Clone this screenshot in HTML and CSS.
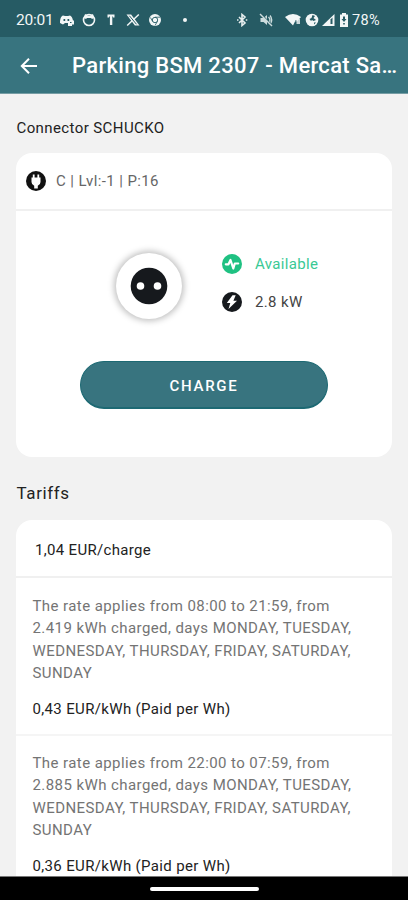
FILE: index.html
```html
<!DOCTYPE html>
<html lang="en">
<head>
  <meta charset="UTF-8">
  <meta name="viewport" content="width=device-width, initial-scale=1">
  <title>Parking BSM 2307 - Mercat Sa…</title>
  <link rel="stylesheet" href="styles.css">
</head>
<body>

<div class="screen">
  <!-- Status bar -->
  <div class="status-bar">
    <span class="time">20:01</span>
    <div class="notifications">
      <svg viewBox="0 0 14 14"><path d="M0 10C0 5 1.500 3 3 2.500l2 .5h3l2-.5c1.500.5 2.500 2.500 3 5h1v4h-2v1.500H8V10H5l-2 1.500z"/><path class="cut" d="M3.500 6h1.700v2H3.500zM7.500 6h1.700v2H7.500zM10 9h1.500v1H10z"/></svg>
      <svg viewBox="0 0 14 14"><circle cx="7" cy="7" r="5.500" fill="none" stroke="#f2f6f6" stroke-width="1.600"/><path d="M2 5l1-4 3 1.500h2L11 1l1 4-2 1-1-1H5L4 6z"/></svg>
      <svg viewBox="0 0 14 14"><path d="M3.500 1.500h7v3H9v-1H8.300v8.500H5.900V3.500H5v1H3.500z"/></svg>
      <svg viewBox="0 0 14 14"><path d="M.5 1.500h4.600l8.400 11H8.900z"/><path d="M12.800 1.500l-11.600 11" stroke="#f2f6f6" stroke-width="1.500"/><path d="M3.300 2.700l7.200 8.600" stroke="#265b64" stroke-width="1"/></svg>
      <svg viewBox="0 0 14 14"><circle cx="7" cy="7" r="6"/><circle class="cut-line" cx="7" cy="7" r="2.700" stroke-width=".9"/><path class="cut-line" d="M7 4.200h5M4.600 8.400L2.400 4.500M9.400 8.400L7 12.500" stroke-width=".8"/></svg>
    </div>
    <span class="dot"></span>
    <div class="system">
      <svg class="bluetooth" viewBox="0 0 12 14"><path d="M3 4l6 6-3 2.500v-11L9 4l-6 6M1 7h1.500M9.800 7h1.500" fill="none" stroke="#e6eeee" stroke-width="1.600"/></svg>
      <svg class="mute" viewBox="0 0 14 14"><path d="M1.500 5h3L8 2v10L4.500 9h-3z" fill="#cddcdd"/><path d="M9.500 4q3 3 0 6M11 2.500q3.500 4.500 0 9" fill="none" stroke="#cddcdd" stroke-width="1.300"/><path d="M2 1l12 12" stroke="#265b64" stroke-width="1.200"/><path d="M1 1l12 12" stroke="#cddcdd" stroke-width="1.400"/></svg>
      <svg class="wifi" viewBox="0 0 16 14"><path d="M0 4Q8-2 16 4l-4 4.500h-2L8 12.500z"/><path class="cut" d="M10.500 7H11.500v4.500h-1z"/><path d="M11.500 6h3.500v5h-3.500z" opacity=".8"/></svg>
      <svg class="data" viewBox="0 0 14 14"><circle cx="7" cy="7" r="6.300"/><path class="cut" d="M7.500 2l2.500 1-1.500 2L11 7 8.500 8 7 7 6 8 4.500 6 6.500 5zM9 9.500h2l-2 2z"/></svg>
      <svg class="signal" viewBox="0 0 13 14"><path d="M12.500 1v12H0z"/><path class="cut" d="M8.500 6.500l2-2V11h-2z"/></svg>
      <svg class="battery" viewBox="0 0 10 14"><path d="M3 0h4v1.500h2V14H1V1.500h2z"/><path class="cut" d="M4 3.500h2v2.500h1.500L5 9 2.500 6H4zM4.200 10h1.600v1.500H4.200z"/></svg>
      <span class="percent">78%</span>
    </div>
  </div>

  <!-- App bar -->
  <header class="app-bar">
    <svg class="back" viewBox="0 0 18 18"><path d="M17 9H2M9 1.800L1.800 9 9 16.200" fill="none" stroke="#fff" stroke-width="2"/></svg>
    <h1>Parking BSM 2307 - Mercat Sa…</h1>
  </header>

  <main class="content">
    <h2 class="connector-title">Connector SCHUCKO</h2>

    <section class="card connector">
      <div class="connector-head">
        <svg class="round-icon" viewBox="0 0 20 20"><circle cx="10" cy="10" r="10" fill="#111"/><path d="M5.500 6.500h1.300V3.500h1.800v3h2.800v-3h1.800v3h1.300v4.500q0 2.800-2.700 3.800V17.500H8.200v-2.700Q5.500 13.800 5.500 11z" fill="#fff"/></svg>
        <span>C | Lvl:-1 | P:16</span>
      </div>
      <div class="connector-body">
        <div class="plug">
          <svg viewBox="0 0 38 38"><circle cx="19" cy="19" r="18.300" fill="#16191d"/><circle cx="10.500" cy="19" r="3.800" fill="#fff"/><circle cx="27.500" cy="19" r="3.800" fill="#fff"/></svg>
        </div>
        <div class="info">
          <div class="info-row available">
            <svg class="round-icon" viewBox="0 0 20 20"><circle cx="10" cy="10" r="10" fill="#1fc182"/><path d="M3.800 10.300h2.700L8.500 6l2.800 8.500 1.500-5h3.400" fill="none" stroke="#fff" stroke-width="2.200" stroke-linecap="round" stroke-linejoin="round"/></svg>
            <span>Available</span>
          </div>
          <div class="info-row">
            <svg class="round-icon" viewBox="0 0 20 20"><circle cx="10" cy="10" r="10" fill="#16191d"/><path d="M10.500 3.200L4.800 11h3.500L6.500 17 15 8.800h-3.600l2.300-5.600z" fill="#fff"/></svg>
            <span>2.8 kW</span>
          </div>
        </div>
      </div>
      <button class="charge-btn">CHARGE</button>
    </section>

    <h2 class="tariffs-title">Tariffs</h2>

    <section class="card tariffs">
      <div class="base-price">1,04 EUR/charge</div>
      <div class="rate">
        <p>The rate applies from 08:00 to 21:59, from 2.419 kWh charged, days MONDAY, TUESDAY, WEDNESDAY, THURSDAY, FRIDAY, SATURDAY, SUNDAY</p>
        <strong>0,43 EUR/kWh (Paid per Wh)</strong>
      </div>
      <div class="rate">
        <p>The rate applies from 22:00 to 07:59, from 2.885 kWh charged, days MONDAY, TUESDAY, WEDNESDAY, THURSDAY, FRIDAY, SATURDAY, SUNDAY</p>
        <strong>0,36 EUR/kWh (Paid per Wh)</strong>
      </div>
    </section>
  </main>

  <div class="nav-bar"><span class="handle"></span></div>
</div>

</body>
</html>
```
FILE: styles.css
```css
* {
  box-sizing: border-box;
}

body {
  margin: 0;
  font-family: Roboto, "Liberation Sans", sans-serif;
  background: #f2f2f2;
  color: #222;
}

h1, h2, p {
  margin: 0;
}

svg {
  display: block;
  flex: none;
}

.screen {
  display: flex;
  flex-direction: column;
  width: 408px;
  height: 900px;
  overflow: hidden;
}

/* Status bar */
.status-bar {
  display: flex;
  align-items: center;
  flex: none;
  height: 37px;
  padding: 3px 26px 0 16px;
  background: #265b64;
  color: #f2f6f6;
  font-size: 15.5px;
}

.status-bar svg {
  height: 14px;
  fill: #f2f6f6;
}

.status-bar .cut {
  fill: #265b64;
}

.status-bar .cut-line {
  fill: none;
  stroke: #265b64;
}

.time {
  width: 40px;
  letter-spacing: -0.2px;
}

.notifications {
  display: flex;
}

.notifications svg {
  width: 22px;
}

.dot {
  width: 4px;
  height: 4px;
  margin-left: 17px;
  border-radius: 50%;
  background: #f2f6f6;
}

.system {
  display: flex;
  align-items: center;
  margin-left: auto;
}

.bluetooth {
  width: 12px;
  margin-right: 11px;
}

.mute {
  width: 14px;
  margin-right: 12px;
}

.wifi {
  width: 16px;
  margin-right: 4px;
}

.data {
  width: 14px;
  margin-right: 3px;
}

.signal {
  width: 13px;
  margin-right: 4px;
}

.battery {
  width: 10px;
  margin-right: 3px;
}

.percent {
  width: 30px;
  font-size: 14.5px;
  letter-spacing: 0.3px;
}

/* App bar */
.app-bar {
  display: flex;
  align-items: center;
  flex: none;
  height: 57px;
  padding: 1px 0 0 20px;
  background: #38747f;
  border-bottom: 1px solid #769da4;
  color: #fff;
}

.back {
  width: 18px;
  height: 18px;
  margin-right: 34px;
}

.app-bar h1 {
  padding-top: 1px;
  font-size: 22px;
  font-weight: 500;
  line-height: 30px;
  letter-spacing: 0.3px;
  white-space: nowrap;
}

/* Content */
.content {
  flex: 1;
  min-height: 0;
  padding: 24px 16px 0;
  overflow: hidden;
}

.connector-title {
  padding-left: 0.5px;
  font-size: 15px;
  font-weight: 400;
  line-height: 20px;
  letter-spacing: 0.4px;
}

.card {
  background: #fff;
  border-radius: 16px;
}

.connector {
  height: 304px;
  margin-top: 15px;
}

.connector-head {
  display: flex;
  align-items: center;
  gap: 10px;
  height: 58px;
  padding: 0 10px;
  border-bottom: 2px solid #f0f0f0;
  color: #666;
  font-size: 15px;
  letter-spacing: 0.4px;
}

.round-icon {
  width: 20px;
  height: 20px;
}

.connector-body {
  display: flex;
  align-items: center;
  gap: 40px;
  height: 150px;
  padding-left: 100px;
}

.plug {
  display: flex;
  align-items: center;
  justify-content: center;
  width: 66px;
  height: 66px;
  border-radius: 50%;
  box-shadow: 0 0 6px 2px rgba(0, 0, 0, 0.25);
}

.plug svg {
  width: 38px;
  height: 38px;
}

.info {
  display: flex;
  flex-direction: column;
  gap: 18px;
  margin-top: -7px;
}

.info-row {
  display: flex;
  align-items: center;
  gap: 13px;
  color: #444;
  font-size: 15px;
  line-height: 20px;
  letter-spacing: 0.35px;
}

.available {
  color: #3ac995;
}

.charge-btn {
  display: block;
  width: 248px;
  height: 48px;
  margin: 0 auto;
  padding: 2px 0 0;
  border: 1px solid #1d6973;
  border-bottom-width: 2px;
  border-radius: 24px;
  background: #38747f;
  color: #fff;
  font-family: inherit;
  font-size: 15px;
  font-weight: 500;
  letter-spacing: 1.7px;
}

.tariffs-title {
  margin-top: 25px;
  padding-left: 0.5px;
  font-size: 17px;
  font-weight: 400;
  line-height: 22px;
  letter-spacing: 0.6px;
}

.tariffs {
  margin-top: 16px;
}

.base-price {
  height: 58px;
  padding: 20px 19px 0;
  border-bottom: 2px solid #f0f0f0;
  font-size: 15px;
  line-height: 20px;
  letter-spacing: 0.32px;
}

.rate {
  height: 158px;
  padding: 17px 35px 0 16.5px;
  border-bottom: 2px solid #f5f5f5;
}

.rate p {
  color: #747474;
  font-size: 15px;
  line-height: 22.3px;
  letter-spacing: 0.42px;
}

.rate strong {
  display: block;
  margin-top: 15px;
  font-size: 15px;
  font-weight: 400;
  line-height: 20px;
  letter-spacing: 0.35px;
}

.rate + .rate {
  padding-top: 16px;
}

/* Gesture bar */
.nav-bar {
  display: flex;
  align-items: center;
  justify-content: center;
  flex: none;
  height: 24px;
  border-top: 1px solid #777;
  background: #000;
}

.handle {
  width: 109px;
  height: 4px;
  border-radius: 2px;
  background: #fff;
}
```
